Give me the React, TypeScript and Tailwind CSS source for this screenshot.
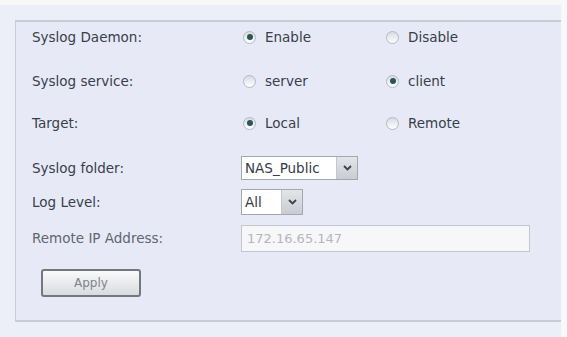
import React from "react";

function Radio({ checked, label }: { checked?: boolean; label: string }) {
  return (
    <div className="flex items-center w-[143px]">
      <span className="w-[13px] h-[13px] rounded-full border border-[#b4b9c3] bg-gradient-to-b from-[#d8dbe2] to-[#ffffff] flex items-center justify-center ml-[2px]">
        {checked && <span className="w-[6px] h-[6px] rounded-full bg-[#2c5557]" />}
      </span>
      <span className="ml-[9px]">{label}</span>
    </div>
  );
}

function Select({ value, width }: { value: string; width: number }) {
  return (
    <div className="flex h-full border border-[#a3a7b0] bg-white" style={{ width }}>
      <div className="flex-1 flex items-center pl-[3px] text-[#333a45]">{value}</div>
      <div className="w-[21px] border-l border-[#c4c7ce] bg-gradient-to-b from-[#e4e5e9] to-[#c9ccd2] flex items-center justify-center">
        <svg width="9" height="6" viewBox="0 0 9 6">
          <path d="M1 1 L4.5 4.5 L8 1" stroke="#3c4250" strokeWidth="1.8" fill="none" />
        </svg>
      </div>
    </div>
  );
}

export default function App() {
  return (
    <div
      className="w-[567px] h-[337px] bg-[#f8f8fa] overflow-hidden text-[13.5px] text-[#383e4b]"
      style={{ fontFamily: "Tahoma, 'DejaVu Sans', sans-serif" }}
    >
      <div className="flex h-full pt-[5px]">
        <div className="w-[561px] h-full bg-[#eceef8] pt-[15px] pl-[15px]">
          <div className="h-[302px] border-t-2 border-l border-b-2 border-[#c8ccd6] bg-[#e7eaf6] pl-[16px]">
            <div className="flex flex-col">
              <div className="flex items-center h-[28px] mt-[1px]">
                <div className="w-[209px]">Syslog Daemon:</div>
                <Radio checked label="Enable" />
                <Radio label="Disable" />
              </div>
              <div className="flex items-center h-[28px] mt-[16px]">
                <div className="w-[209px]">Syslog service:</div>
                <Radio label="server" />
                <Radio checked label="client" />
              </div>
              <div className="flex items-center h-[28px] mt-[14px]">
                <div className="w-[209px]">Target:</div>
                <Radio checked label="Local" />
                <Radio label="Remote" />
              </div>
              <div className="flex items-center h-[24px] mt-[19px]">
                <div className="w-[209px]">Syslog folder:</div>
                <Select value="NAS_Public" width={117} />
              </div>
              <div className="flex items-center h-[26px] mt-[9px]">
                <div className="w-[209px]">Log Level:</div>
                <Select value="All" width={62} />
              </div>
              <div className="flex items-center h-[27px] mt-[10px]">
                <div className="w-[209px] text-[#60656f]">Remote IP Address:</div>
                <div className="w-[289px] h-full border border-[#c3c6ce] bg-[#f7f7f9] flex items-center pl-[5px] text-[#b3b6be] text-[13px]">
                  172.16.65.147
                </div>
              </div>
              <div className="mt-[17px] ml-[9px]">
                <button className="w-[100px] h-[28px] rounded-[3px] border-2 border-[#73777f] bg-gradient-to-b from-[#fafafa] to-[#d9dbe0] text-[12px] text-[#7d828b]">
                  Apply
                </button>
              </div>
            </div>
          </div>
        </div>
      </div>
    </div>
  );
}
